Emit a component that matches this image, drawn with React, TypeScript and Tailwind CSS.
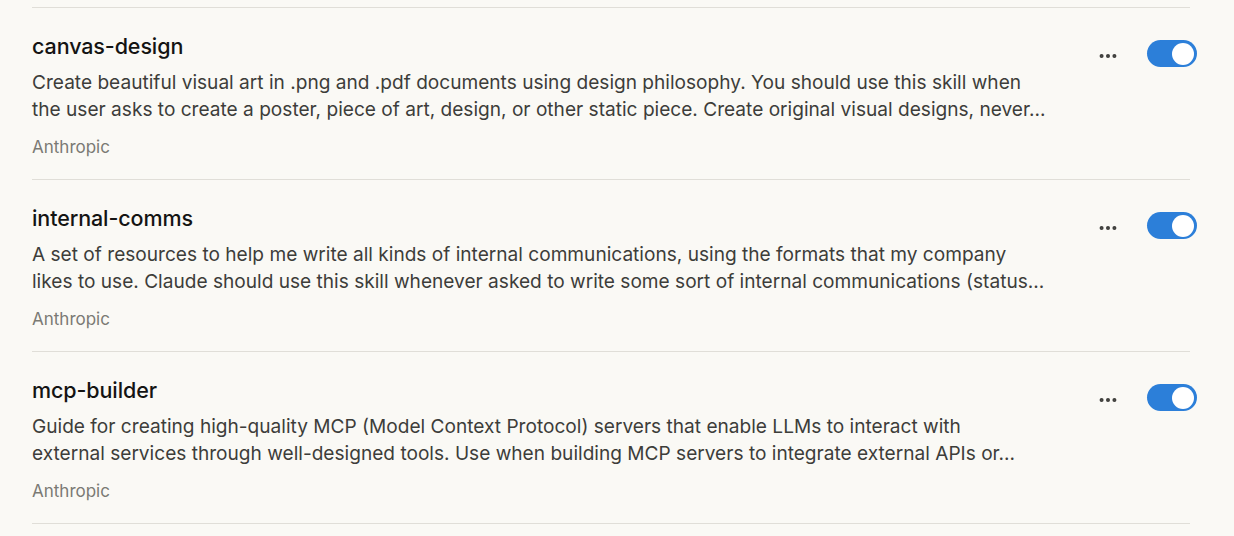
import { MoreHorizontal } from 'lucide-react'

type Skill = {
  name: string
  lines: [string, string]
  author: string
}

const skills: Skill[] = [
  {
    name: 'canvas-design',
    lines: [
      'Create beautiful visual art in .png and .pdf documents using design philosophy. You should use this skill when',
      'the user asks to create a poster, piece of art, design, or other static piece. Create original visual designs, never…',
    ],
    author: 'Anthropic',
  },
  {
    name: 'internal-comms',
    lines: [
      'A set of resources to help me write all kinds of internal communications, using the formats that my company',
      'likes to use. Claude should use this skill whenever asked to write some sort of internal communications (status…',
    ],
    author: 'Anthropic',
  },
  {
    name: 'mcp-builder',
    lines: [
      'Guide for creating high-quality MCP (Model Context Protocol) servers that enable LLMs to interact with',
      'external services through well-designed tools. Use when building MCP servers to integrate external APIs or…',
    ],
    author: 'Anthropic',
  },
]

function Toggle({ on }: { on: boolean }) {
  return (
    <button
      type="button"
      role="switch"
      aria-checked={on}
      className="relative w-[50px] h-[27px] rounded-full bg-[#2c7fd9] flex items-center"
    >
      <span className="absolute right-[3px] w-[22px] h-[22px] rounded-full bg-white" />
    </button>
  )
}

function SkillRow({ skill }: { skill: Skill }) {
  return (
    <div className="w-[1158px] border-b border-[#e0ded8] pt-[24px] pb-[20px] flex">
      <div className="flex-1 min-w-0">
        <h3 className="text-[21.5px] leading-[28px] font-medium tracking-[-0.1px] text-[#141413]">{skill.name}</h3>
        <div className="mt-[9px] text-[19.1px] leading-[27px] text-[#3d3d3a]">
          {skill.lines.map((l, i) => (
            <p key={i} className="whitespace-nowrap">{l}</p>
          ))}
        </div>
        <p className="mt-[12px] text-[17px] leading-[24px] text-[#7b7a74]">{skill.author}</p>
      </div>
      <div className="flex items-start gap-[28px] -mr-[7px] pt-[8px]">
        <button type="button" className="mt-[5px] text-[#3d3d3a]" aria-label="More options">
          <MoreHorizontal className="w-[22px] h-[22px]" strokeWidth={2.4} />
        </button>
        <Toggle on />
      </div>
    </div>
  )
}

export default function App() {
  return (
    <div
      className="min-h-screen bg-[#faf9f5] pl-8"
      style={{ fontFamily: 'Inter, "Noto Sans", sans-serif' }}
    >
      <div className="h-[8px] w-[1158px] border-b border-[#e0ded8]" />
      {skills.map(s => (
        <SkillRow key={s.name} skill={s} />
      ))}
    </div>
  )
}
